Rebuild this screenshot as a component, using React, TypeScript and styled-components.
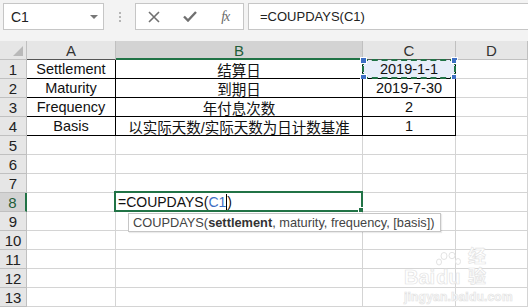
import React from 'react'
import styled, { createGlobalStyle } from 'styled-components'

const GREEN = '#217346'
const GRID = '#d4d4d4'
const HEAD_LINE = '#c0c0c0'
const REF_BLUE = '#3d6fc4'
const MARK = '#e3e3e3'

const GlobalStyle = createGlobalStyle`
    html, body {
        margin: 0;
        padding: 0;
        background: #fff;
    }
    body {
        font-family: "Liberation Sans", "Noto Sans CJK SC", sans-serif;
    }
`;

const Window = styled.div`
    position: relative;
    width: 528px;
    height: 307px;
    overflow: hidden;
    background: #fff;
`;

/* ---------- formula bar ---------- */

const FormulaBar = styled.div`
    height: 41px;
    box-sizing: border-box;
    background: #f3f3f3;
    display: flex;
    align-items: flex-start;
    padding: 3px 0 0 3px;
`;
const NameBox = styled.div`
    width: 101px;
    height: 27px;
    box-sizing: border-box;
    background: #fff;
    border: 1px solid #c6c6c6;
    display: flex;
    align-items: center;
    justify-content: space-between;
    padding: 0 5px 0 7px;
    font-size: 14px;
    color: #222;
`;
const DropArrow = styled.span`
    width: 0;
    height: 0;
    border-left: 4px solid transparent;
    border-right: 4px solid transparent;
    border-top: 4px solid #777;
`;
const Grip = styled.div`
    width: 31px;
    height: 27px;
    display: flex;
    flex-direction: column;
    align-items: center;
    justify-content: center;
    gap: 2px;
    span {
        width: 2px;
        height: 2px;
        background: #b5b5b5;
    }
`;
const ButtonGroup = styled.div`
    width: 109px;
    height: 27px;
    box-sizing: border-box;
    background: #fff;
    border: 1px solid #c6c6c6;
    display: flex;
`;
const BarButton = styled.div`
    flex: 1;
    display: flex;
    align-items: center;
    justify-content: center;
    color: #707070;
`;
const FxLabel = styled.span`
    font-family: "Liberation Serif", serif;
    font-style: italic;
    font-size: 14px;
    color: #6a6a6a;
    letter-spacing: -1px;
`;
const FormulaInput = styled.div`
    flex: 1;
    height: 27px;
    margin-left: 4px;
    box-sizing: border-box;
    background: #fff;
    border: 1px solid #c6c6c6;
    border-right: none;
    display: flex;
    align-items: center;
    padding-left: 11px;
    font-size: 13px;
    color: #222;
`;

/* ---------- sheet grid ---------- */

const Sheet = styled.div`
    display: grid;
    grid-template-columns: 27px 89px 247px 93px 72px;
    grid-auto-rows: 19px;
`;
const Corner = styled.div`
    box-sizing: border-box;
    background: #e6e6e6;
    border-right: 1px solid ${HEAD_LINE};
    border-bottom: 1px solid ${HEAD_LINE};
    display: flex;
    align-items: flex-end;
    justify-content: flex-end;
    padding: 0 3px 3px 0;
`;
const CornerMark = styled.span`
    width: 0;
    height: 0;
    border-left: 10px solid transparent;
    border-bottom: 10px solid #b9b9b9;
`;

interface HeadProps {
    readonly $selected?: boolean;
    readonly $edge?: string;
}
const ColHead = styled.div<HeadProps>`
    box-sizing: border-box;
    background: ${p => (p.$selected ? '#d3d3d3' : '#e6e6e6')};
    border-right: 1px solid ${HEAD_LINE};
    border-bottom: ${p => (p.$selected ? `2px solid ${GREEN}` : `1px solid ${p.$edge || HEAD_LINE}`)};
    display: flex;
    align-items: center;
    justify-content: center;
    font-size: 15px;
    color: ${p => (p.$selected ? '#1f5e3a' : '#333')};
    padding-top: 1px;
`;
const RowHead = styled.div<HeadProps>`
    box-sizing: border-box;
    background: ${p => (p.$selected ? '#d3d3d3' : '#e6e6e6')};
    border-right: ${p => (p.$selected ? `2px solid ${GREEN}` : `1px solid ${HEAD_LINE}`)};
    border-bottom: 1px solid ${HEAD_LINE};
    display: flex;
    align-items: center;
    justify-content: center;
    font-size: 15px;
    color: ${p => (p.$selected ? '#1f5e3a' : '#222')};
`;

interface CellProps {
    readonly $boxed?: boolean;
    readonly $fill?: string;
}
const Cell = styled.div<CellProps>`
    position: relative;
    box-sizing: border-box;
    background: ${p => p.$fill || '#fff'};
    border-right: 1px solid ${p => (p.$boxed ? '#000' : GRID)};
    border-bottom: 1px solid ${p => (p.$boxed ? '#000' : GRID)};
    display: flex;
    align-items: center;
    justify-content: center;
    font-size: 14.5px;
    color: #111;
    white-space: nowrap;
`;

/* ---------- overlays ---------- */

const Marquee = styled.div`
    position: absolute;
    inset: -1px -1px -1px -1px;
    border: 2px dashed ${GREEN};
    pointer-events: none;
`;
const Handle = styled.span<{ $x: 'left' | 'right'; $y: 'top' | 'bottom' }>`
    position: absolute;
    ${p => p.$x}: -4px;
    ${p => p.$y}: -4px;
    width: 5px;
    height: 5px;
    background: ${REF_BLUE};
    border: 1px solid #fff;
`;
const EditFrame = styled.div`
    position: absolute;
    inset: -2px -1px -1px -2px;
    border: 2px solid ${GREEN};
    pointer-events: none;
`;
const FillHandle = styled.span`
    position: absolute;
    right: -4px;
    bottom: -4px;
    width: 5px;
    height: 5px;
    background: ${GREEN};
    border: 1px solid #fff;
`;
const EditText = styled.div`
    position: absolute;
    left: 2px;
    top: 0;
    bottom: 0;
    display: flex;
    align-items: center;
    font-size: 14px;
    color: #111;
`;
const RefText = styled.span`
    color: ${REF_BLUE};
`;
const Caret = styled.span`
    display: inline-block;
    width: 1px;
    height: 16px;
    background: #000;
`;
const Tip = styled.div`
    position: absolute;
    left: 12px;
    top: 20px;
    width: 313px;
    height: 19px;
    box-sizing: border-box;
    background: #fff;
    border: 1px solid #c6c6c6;
    box-shadow: 1px 1px 1px rgba(0, 0, 0, 0.08);
    display: flex;
    align-items: center;
    padding-left: 4px;
    font-size: 12.8px;
    color: #444;
    z-index: 2;
    white-space: nowrap;
    b {
        color: #333;
    }
`;

/* ---------- watermark ---------- */

const Watermark = styled.div`
    position: absolute;
    left: 404px;
    top: 247px;
    width: 100px;
    color: #fff;
    -webkit-text-stroke: 0.7px ${MARK};
    pointer-events: none;
`;
const MarkLine = styled.div`
    display: flex;
    align-items: flex-end;
    gap: 1px;
    font-weight: bold;
    font-size: 20px;
    line-height: 20px;
`;
const PawWord = styled.span`
    position: relative;
    width: 26px;
    svg {
        position: absolute;
        left: 0;
        bottom: 15px;
    }
`;
const MarkCn = styled.span`
    margin-left: 5px;
    font-size: 18px;
`;
const MarkSite = styled.div`
    font-size: 12px;
    font-weight: bold;
    margin-top: 3px;
    letter-spacing: 0.2px;
`;

const COLS = ['A', 'B', 'C', 'D'];
const DATA = [
    ['Settlement', '结算日', '2019-1-1'],
    ['Maturity', '到期日', '2019-7-30'],
    ['Frequency', '年付息次数', '2'],
    ['Basis', '以实际天数/实际天数为日计数基准', '1'],
];
const ROW_COUNT = 13;

const CrossIcon = () => (
    <svg width="12" height="12" viewBox="0 0 12 12">
        <path d="M1 1 L11 11 M11 1 L1 11" stroke="#707070" strokeWidth="1.6" />
    </svg>
);
const CheckIcon = () => (
    <svg width="14" height="11" viewBox="0 0 14 11">
        <path d="M1 5.5 L5 9.5 L13 1" stroke="#707070" strokeWidth="2.4" fill="none" />
    </svg>
);
const PawIcon = () => (
    <svg width="26" height="20" viewBox="0 0 26 20" fill="#fff" stroke={MARK} strokeWidth="1">
        <ellipse cx="8" cy="4" rx="3" ry="3.5" />
        <ellipse cx="16" cy="3.5" rx="3" ry="3.2" />
        <ellipse cx="3" cy="10" rx="2.5" ry="3" />
        <ellipse cx="22" cy="9.5" rx="2.5" ry="3" />
    </svg>
);

const App: React.FC = () => {
    const cellFor = (row: number, col: number) => {
        const key = `${row}-${col}`;
        const boxed = row <= DATA.length && col < 3;
        const value = boxed ? DATA[row - 1][col] : '';
        if (row === 1 && col === 2) {
            return (
                <Cell key={key} $boxed $fill="#e7eef9">
                    {value}
                    <Marquee>
                        <Handle $x="left" $y="top" />
                        <Handle $x="right" $y="top" />
                        <Handle $x="left" $y="bottom" />
                        <Handle $x="right" $y="bottom" />
                    </Marquee>
                </Cell>
            );
        }
        if (row === 8 && col === 1) {
            return (
                <Cell key={key}>
                    <EditText>
                        =COUPDAYS(<RefText>C1</RefText><Caret />)
                    </EditText>
                    <EditFrame>
                        <FillHandle />
                    </EditFrame>
                    <Tip>
                        COUPDAYS(<b>settlement</b>, maturity, frequency, [basis])
                    </Tip>
                </Cell>
            );
        }
        return (
            <Cell key={key} $boxed={boxed}>
                {value}
            </Cell>
        );
    };

    return (
        <Window>
            <GlobalStyle />
            <FormulaBar>
                <NameBox>
                    C1
                    <DropArrow />
                </NameBox>
                <Grip>
                    <span />
                    <span />
                    <span />
                </Grip>
                <ButtonGroup>
                    <BarButton><CrossIcon /></BarButton>
                    <BarButton><CheckIcon /></BarButton>
                    <BarButton><FxLabel>fx</FxLabel></BarButton>
                </ButtonGroup>
                <FormulaInput>=COUPDAYS(C1)</FormulaInput>
            </FormulaBar>
            <Sheet>
                <Corner>
                    <CornerMark />
                </Corner>
                {COLS.map(c => (
                    <ColHead key={c} $selected={c === 'B'} $edge={c === 'A' || c === 'C' ? '#555' : undefined}>
                        {c}
                    </ColHead>
                ))}
                {Array.from({ length: ROW_COUNT }, (_, i) => i + 1).map(row => (
                    <React.Fragment key={row}>
                        <RowHead $selected={row === 8}>{row}</RowHead>
                        {COLS.map((_, col) => cellFor(row, col))}
                    </React.Fragment>
                ))}
            </Sheet>
            <Watermark>
                <MarkLine>
                    Bai
                    <PawWord>
                        <PawIcon />
                        du
                    </PawWord>
                    <MarkCn>经验</MarkCn>
                </MarkLine>
                <MarkSite>jingyan.baidu.com</MarkSite>
            </Watermark>
        </Window>
    );
};

export default App;
